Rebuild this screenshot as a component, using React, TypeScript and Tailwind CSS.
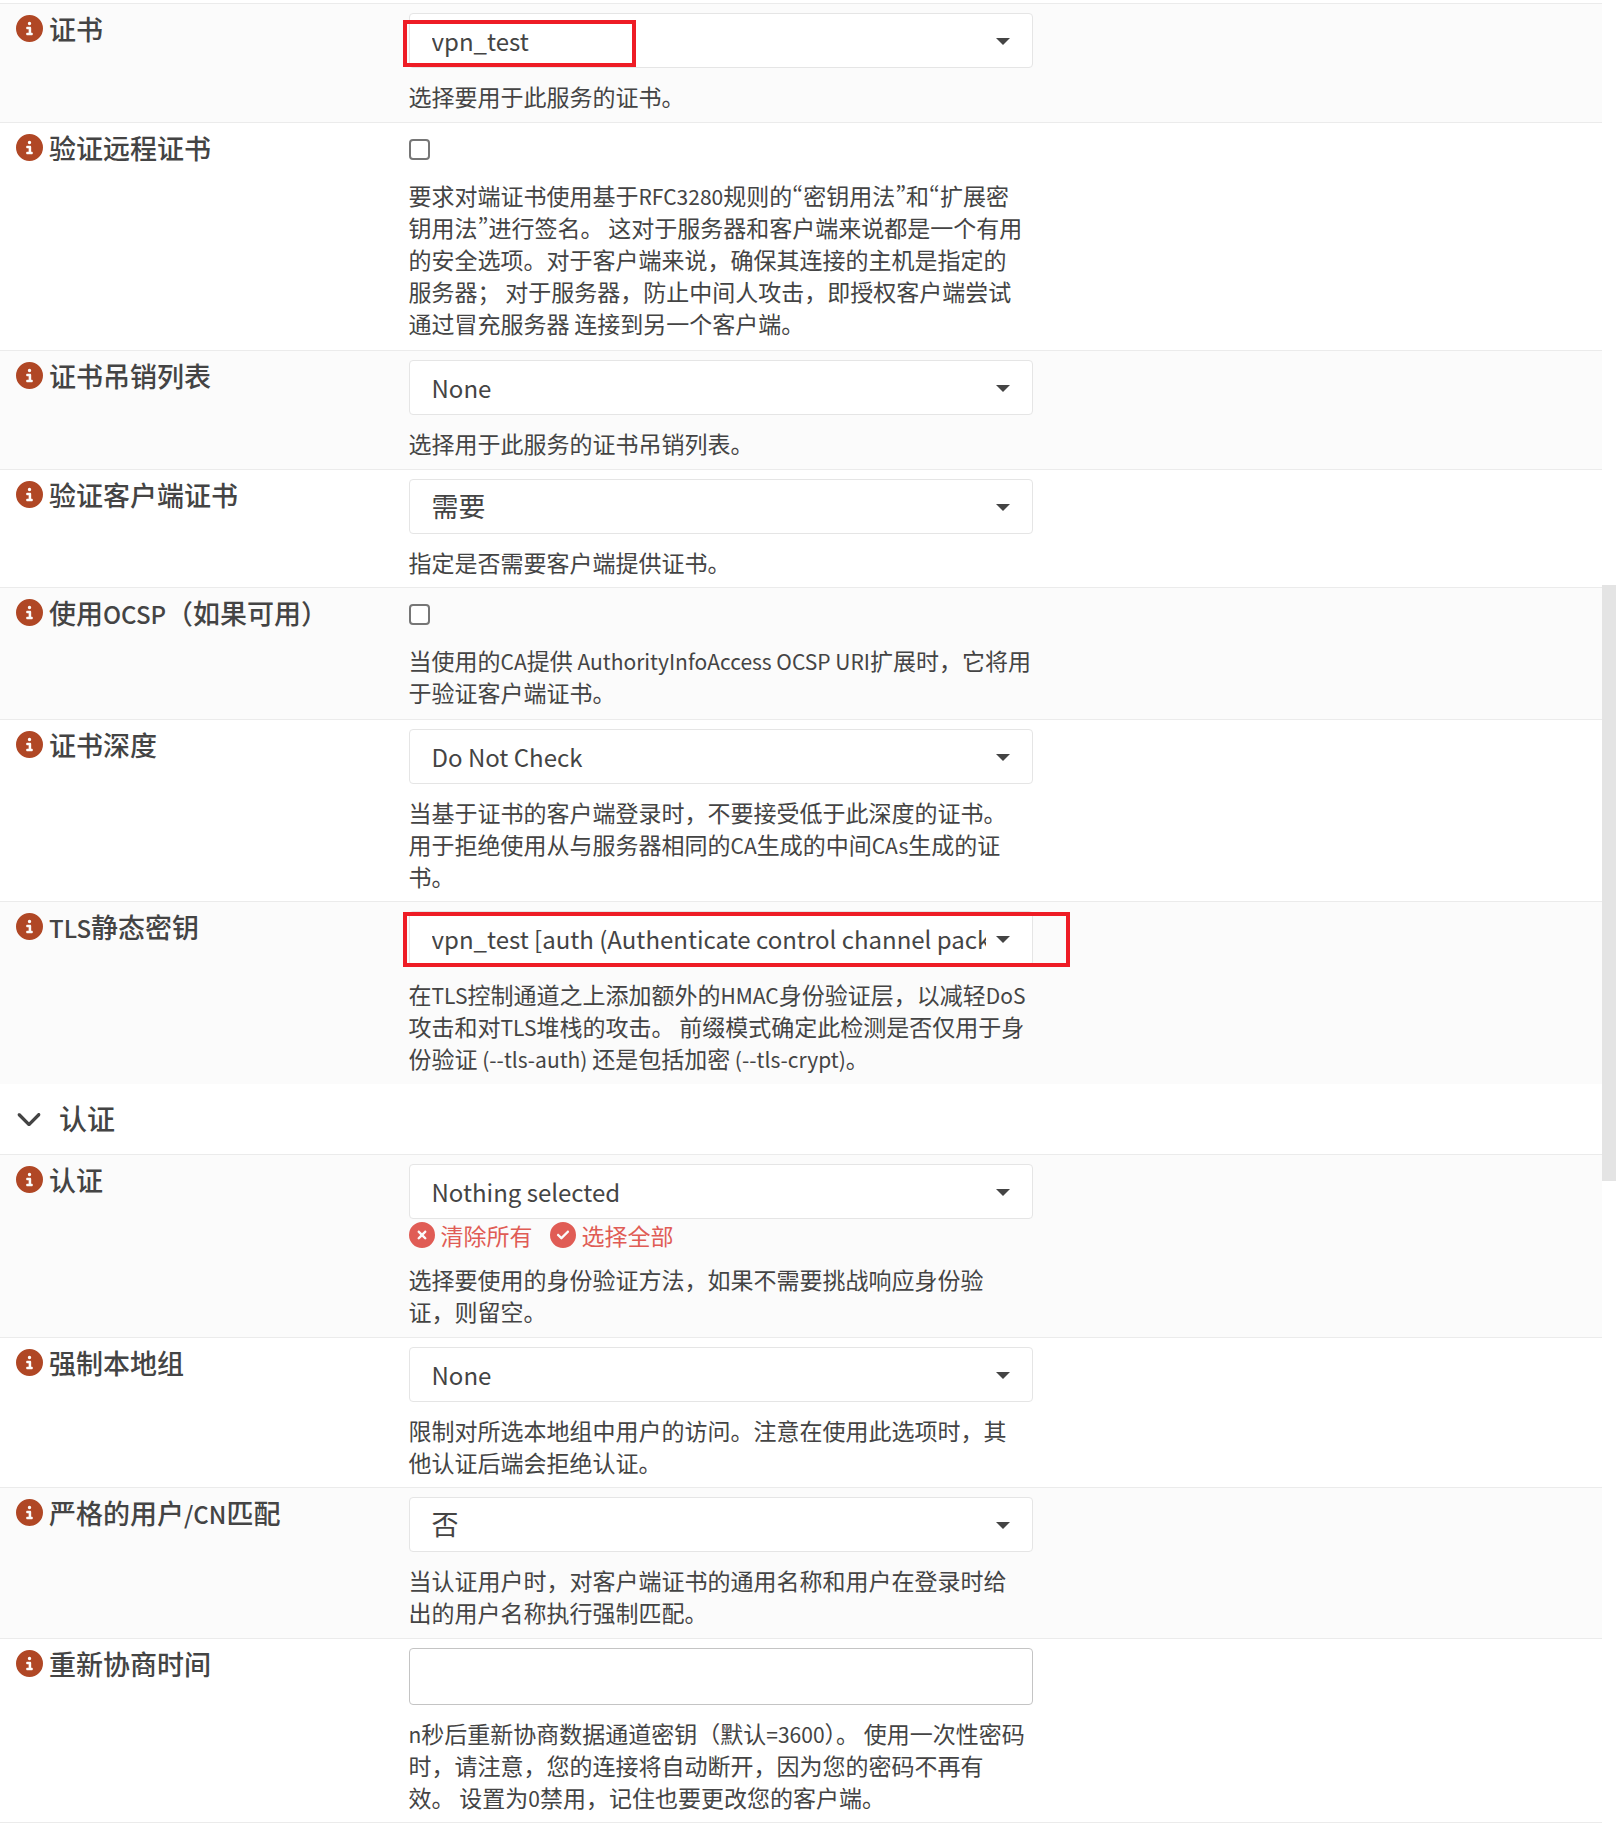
import React, { useState } from "react";
import {
    FaChevronDown,
    FaCircleCheck,
    FaCircleInfo,
    FaCircleXmark,
} from "react-icons/fa6";

type Field = {
    id: string,
    label: string,
    help: string,
    kind: "select" | "checkbox" | "text",
    options?: string[],
    marker?: "short" | "long",
    bulkActions?: boolean,
}

const certificateFields: Field[] = [
    {
        id: "cert",
        label: "证书",
        kind: "select",
        options: ["vpn_test"],
        marker: "short",
        help: "选择要用于此服务的证书。",
    },
    {
        id: "verify_remote",
        label: "验证远程证书",
        kind: "checkbox",
        help: "要求对端证书使用基于RFC3280规则的“密钥用法”和“扩展密\n钥用法”进行签名。 这对于服务器和客户端来说都是一个有用\n的安全选项。对于客户端来说，确保其连接的主机是指定的\n服务器； 对于服务器，防止中间人攻击，即授权客户端尝试\n通过冒充服务器 连接到另一个客户端。",
    },
    {
        id: "crl",
        label: "证书吊销列表",
        kind: "select",
        options: ["None"],
        help: "选择用于此服务的证书吊销列表。",
    },
    {
        id: "verify_client",
        label: "验证客户端证书",
        kind: "select",
        options: ["需要"],
        help: "指定是否需要客户端提供证书。",
    },
    {
        id: "ocsp",
        label: "使用OCSP（如果可用）",
        kind: "checkbox",
        help: "当使用的CA提供 AuthorityInfoAccess OCSP URI扩展时，它将用\n于验证客户端证书。",
    },
    {
        id: "cert_depth",
        label: "证书深度",
        kind: "select",
        options: ["Do Not Check"],
        help: "当基于证书的客户端登录时，不要接受低于此深度的证书。\n用于拒绝使用从与服务器相同的CA生成的中间CAs生成的证\n书。",
    },
    {
        id: "tls_key",
        label: "TLS静态密钥",
        kind: "select",
        options: ["vpn_test [auth (Authenticate control channel packets)]"],
        marker: "long",
        help: "在TLS控制通道之上添加额外的HMAC身份验证层，以减轻DoS\n攻击和对TLS堆栈的攻击。 前缀模式确定此检测是否仅用于身\n份验证 (--tls-auth) 还是包括加密 (--tls-crypt)。",
    },
];

const authFields: Field[] = [
    {
        id: "authmode",
        label: "认证",
        kind: "select",
        options: ["Nothing selected"],
        bulkActions: true,
        help: "选择要使用的身份验证方法，如果不需要挑战响应身份验\n证，则留空。",
    },
    {
        id: "local_group",
        label: "强制本地组",
        kind: "select",
        options: ["None"],
        help: "限制对所选本地组中用户的访问。注意在使用此选项时，其\n他认证后端会拒绝认证。",
    },
    {
        id: "strict_cn",
        label: "严格的用户/CN匹配",
        kind: "select",
        options: ["否"],
        help: "当认证用户时，对客户端证书的通用名称和用户在登录时给\n出的用户名称执行强制匹配。",
    },
    {
        id: "reneg",
        label: "重新协商时间",
        kind: "text",
        help: "n秒后重新协商数据通道密钥（默认=3600）。 使用一次性密码\n时，请注意，您的连接将自动断开，因为您的密码不再有\n效。 设置为0禁用，记住也要更改您的客户端。",
    },
];

const isLatin = (text: string) => /^[\x20-\x7e]+$/.test(text);

// Latin runs are set a little smaller than the Chinese around them,
// the quotes come from the KR face because they are proportional there
const MixedText: React.FC<{ text: string, latinClass: string }> = ({ text, latinClass }) => (
    <>
        {text.split(/([\x20-\x7e]+|[“”])/).map((part, index) => {
            if (part === "“" || part === "”") {
                return <span key={index} lang="ko" className="font-['Noto_Sans_CJK_KR'] leading-none">{part}</span>;
            }
            return isLatin(part) ? <span key={index} className={latinClass}>{part}</span> : part;
        })}
    </>
);

const markerClassMap = {
    short: "top-[7px] h-[47px] w-[233px]",
    long: "top-px h-[55px] w-[667px]",
};

const SelectControl: React.FC<{ field: Field }> = ({ field }) => {
    const options = field.options ?? [];
    const [value, setValue] = useState(options[0]);

    return (
        <div className="relative">
            <select
                id={field.id}
                value={value}
                onChange={e => setValue(e.target.value)}
                className={`${isLatin(value) ? "text-[24px]" : "text-[27px]"} block h-[55px] w-full appearance-none rounded-[4px] border border-[#e5e5e5] bg-white pl-[22px] pr-[46px]`}
            >
                {options.map(option => <option key={option} value={option}>{option}</option>)}
            </select>
            <svg viewBox="0 0 14 7" className="pointer-events-none absolute right-[23px] top-[25px] h-[7px] w-[14px]">
                <path d="M0 0h14L7 7z" fill="#444" />
            </svg>
            {field.marker && (
                <div className={`${markerClassMap[field.marker]} pointer-events-none absolute left-[-6px] border-4 border-[#ee1c25]`} />
            )}
        </div>
    );
};

const BulkActions = () => (
    <div className="flex h-8 items-center gap-[17px] text-[23px] text-[#e05c55]">
        <a href="#clear" className="flex items-center gap-1.5">
            <FaCircleXmark size={26} />
            清除所有
        </a>
        <a href="#all" className="flex items-center gap-1.5">
            <FaCircleCheck size={26} />
            选择全部
        </a>
    </div>
);

const FieldRow: React.FC<{ field: Field, striped: boolean }> = ({ field, striped }) => {
    const isCheckbox = field.kind === "checkbox";
    const bottomClass = isCheckbox ? "pb-[11px]" : striped ? "pb-[10px]" : "pb-[9px]";

    return (
        <div className={`${striped ? "bg-[#fbfbfb]" : "bg-white"} grid grid-cols-[25%_1fr] border-t border-[#ebebeb] pt-[9px]`}>
            <div className="flex h-[31px] items-center gap-1.5 pl-4">
                <a href={`#${field.id}`} className="text-[#b04725]"><FaCircleInfo size={27} /></a>
                <label htmlFor={field.id} className="text-[27px] font-medium leading-[30px]">
                    <MixedText text={field.label} latinClass="text-[24px] leading-none" />
                </label>
            </div>
            <div className={`${bottomClass} w-full max-w-[640px] px-2`}>
                {field.kind === "select" && <SelectControl field={field} />}
                {isCheckbox && (
                    <input
                        id={field.id}
                        type="checkbox"
                        className="mb-[19px] mt-[7px] block size-[21px] appearance-none rounded-[4px] border-2 border-[#767676] bg-white checked:bg-[#767676]"
                    />
                )}
                {field.kind === "text" && (
                    <input
                        id={field.id}
                        type="text"
                        className="block h-[57px] w-full rounded-[4px] border border-[#c4c4c4] bg-white px-5 text-[24px]"
                    />
                )}
                {field.bulkActions && <BulkActions />}
                <p className="mt-3 whitespace-pre-line text-[23px] leading-8">
                    <MixedText text={field.help} latinClass="text-[21px] leading-none" />
                </p>
            </div>
        </div>
    );
};

export default function App() {
    const [expand, setExpand] = useState(true);

    return (
        <div className="flex bg-white font-['Noto_Sans_CJK_SC',sans-serif] text-[#444]">
            <form className="min-w-0 flex-1 border-b border-[#ebebeb] pt-[3px]">
                {certificateFields.map((field, index) => (
                    <FieldRow key={field.id} field={field} striped={index % 2 === 0} />
                ))}
                <button
                    type="button"
                    onClick={() => setExpand(!expand)}
                    className="flex h-[70px] w-full items-center gap-[17px] pb-[3px] pl-4 text-[28px] font-medium"
                >
                    <FaChevronDown size={26} />
                    认证
                </button>
                {expand && authFields.map((field, index) => (
                    <FieldRow key={field.id} field={field} striped={index % 2 === 0} />
                ))}
            </form>
            <div className="w-[14px] pt-[585px]">
                <div className="h-[596px] bg-[#e4e4e4]" />
            </div>
        </div>
    );
}
